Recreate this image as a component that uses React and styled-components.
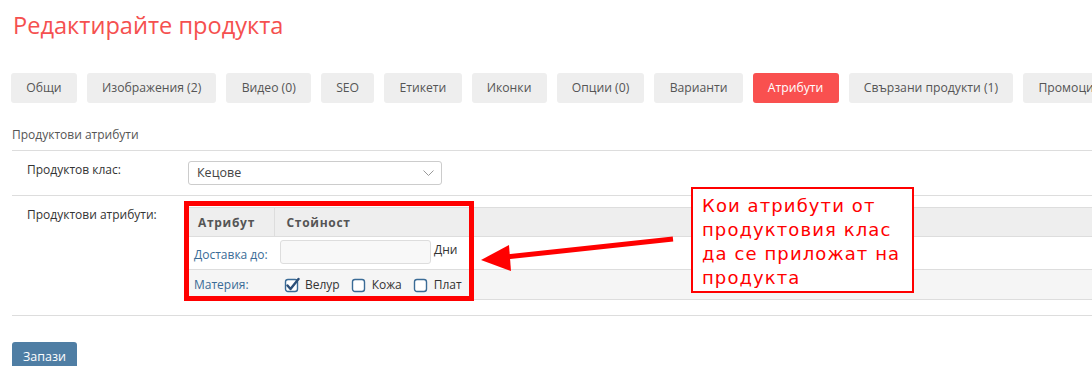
import React from "react";
import styled, { createGlobalStyle } from "styled-components";

const Global = createGlobalStyle`
  html, body { margin: 0; padding: 0; background: #fff; overflow: hidden; }
  body { font-family: "Open Sans", "Noto Sans", sans-serif; font-size: 12px; color: #444; }
  * { box-sizing: border-box; }
`;

const Page = styled.div`
  position: relative;
  width: 1092px;
  height: 366px;
  padding-left: 12px;
  overflow: hidden;
`;

const Title = styled.h1`
  margin: 9px 0 0 1px;
  font-size: 23.6px;
  line-height: 32px;
  font-weight: 400;
  color: #f5504f;
`;

const Tabs = styled.div`
  display: flex;
  gap: 10px;
  margin-top: 32px;
  margin-left: -1px;
  white-space: nowrap;
`;

const Tab = styled.div`
  flex: none;
  height: 30px;
  line-height: 30px;
  padding: 0 15.2px;
  border-radius: 3px;
  font-size: 12.2px;
  background: ${(p) => (p.$active ? "#f9504f" : "#eeeeee")};
  color: ${(p) => (p.$active ? "#ffffff" : "#555555")};
`;

const SectionLabel = styled.div`
  margin-top: 23px;
  padding-bottom: 6px;
  line-height: 18px;
  font-size: 12px;
  color: #555;
  border-bottom: 1px solid #dddddd;
`;

const FormRow = styled.div`
  display: flex;
  padding: ${(p) => p.$pad};
  border-bottom: 1px solid #dddddd;
`;

const Label = styled.div`
  flex: none;
  width: 174px;
  padding-left: 15px;
  line-height: 18px;
  color: #333;
  font-size: 12px;
  margin-top: ${(p) => p.$mt || 0}px;
`;

const Select = styled.div`
  position: relative;
  width: 254px;
  height: 24px;
  margin-left: 2px;
  border: 1px solid #cccccc;
  border-radius: 3px;
  padding-left: 8px;
  line-height: 22px;
  color: #444;
  font-size: 12.5px;
  svg { position: absolute; right: 7px; top: 8px; }
`;

const TableWrap = styled.div`
  position: relative;
  flex: 1;
`;

const Table = styled.table`
  width: 100%;
  border-collapse: collapse;
  border-top: 1px solid #dddddd;
  td, th { padding: 0; }
`;

const HeadRow = styled.tr`
  background: #eeeeee;
  height: 29px;
`;

const Th = styled.th`
  text-align: left;
  font-weight: 700;
  font-size: 12px;
  letter-spacing: 0.7px;
  color: #555;
  padding: 0 12px !important;
  border-right: ${(p) => (p.$divider ? "1px solid #dddddd" : "none")};
  width: ${(p) => p.$w || "auto"};
`;

const BodyRow = styled.tr`
  background: ${(p) => (p.$alt ? "#f5f5f5" : "#ffffff")};
  height: ${(p) => p.$h}px;
  border-top: 1px solid #dddddd;
  border-bottom: 1px solid #dddddd;
`;

const NameCell = styled.td`
  padding-left: 8px !important;
  color: #3a6b96;
  font-size: 12px;
  vertical-align: middle;
  padding-top: ${(p) => p.$pt || 0}px !important;
`;

const ValueCell = styled.td`
  padding-left: 6px !important;
  vertical-align: top;
`;

const InputLine = styled.div`
  display: flex;
  align-items: flex-start;
  padding-top: 3px;
`;

const Input = styled.div`
  width: 151px;
  height: 24px;
  border: 1px solid #dddddd;
  border-radius: 3px;
  background: #f8f8f8;
`;

const Unit = styled.span`
  margin-left: 3px;
  line-height: 18px;
  margin-top: 1px;
  font-size: 12px;
  color: #333;
`;

const Checks = styled.div`
  display: flex;
  align-items: center;
  height: 29px;
  padding-left: 4px;
`;

const CheckItem = styled.label`
  display: flex;
  align-items: center;
  margin-right: 11px;
  color: #333;
  font-size: 12px;
  svg { margin-right: 5px; }
`;

const Highlight = styled.div`
  position: absolute;
  left: -2px;
  top: -6px;
  width: 290px;
  height: 100px;
  border: 5px solid #ff0000;
  pointer-events: none;
`;

const Note = styled.div`
  position: absolute;
  left: 691px;
  top: 187px;
  width: 223px;
  height: 106px;
  border: 2px solid #ff0000;
  background: #ffffff;
  padding: 5px 0 0 9px;
  font-family: "DejaVu Sans", sans-serif;
  font-size: 18px;
  letter-spacing: 1.1px;
  line-height: 24px;
  color: #ff0000;
  white-space: nowrap;
`;

const Arrow = styled.svg`
  position: absolute;
  left: 470px;
  top: 225px;
`;

const SaveButton = styled.button`
  display: block;
  margin-top: 26px;
  height: 30px;
  padding: 0 11px;
  border: none;
  border-radius: 3px;
  background: #4f7ea4;
  color: #ffffff;
  font-family: "Open Sans", sans-serif;
  font-size: 12.5px;
  line-height: 30px;
`;

const Box = ({ checked }) => (
  <svg width="16" height="16" viewBox="0 0 16 16">
    <rect x="1.5" y="2.5" width="12" height="12" rx="2.5" fill="#fff" stroke="#3a6b96" strokeWidth="1.4" />
    {checked && (
      <path d="M3.5 8.5 L6.5 12 L14.5 2" fill="none" stroke="#2c4f78" strokeWidth="2.4" strokeLinecap="round" strokeLinejoin="round" />
    )}
  </svg>
);

const tabs = [
  "Общи",
  "Изображения (2)",
  "Видео (0)",
  "SEO",
  "Етикети",
  "Иконки",
  "Опции (0)",
  "Варианти",
  "Атрибути",
  "Свързани продукти (1)",
  "Промоции",
];

export default function App() {
  return (
    <>
      <Global />
      <Page>
        <Title>Редактирайте продукта</Title>
        <Tabs>
          {tabs.map((t) => (
            <Tab key={t} $active={t === "Атрибути"}>{t}</Tab>
          ))}
        </Tabs>
        <SectionLabel>Продуктови атрибути</SectionLabel>
        <FormRow $pad="10px 0 10px 0">
          <Label>Продуктов клас:</Label>
          <Select>
            Кецове
            <svg width="11" height="7" viewBox="0 0 11 7">
              <path d="M0.5 0.5 L5.5 5.5 L10.5 0.5" fill="none" stroke="#999" strokeWidth="1" />
            </svg>
          </Select>
        </FormRow>
        <FormRow $pad="11px 0 15px 0">
          <Label $mt={-1}>Продуктови атрибути:</Label>
          <TableWrap>
            <Table>
              <thead>
                <HeadRow>
                  <Th $divider $w="88px">Атрибут</Th>
                  <Th>Стойност</Th>
                </HeadRow>
              </thead>
              <tbody>
                <BodyRow $h={33}>
                  <NameCell $pt={2}>Доставка до:</NameCell>
                  <ValueCell>
                    <InputLine>
                      <Input />
                      <Unit>Дни</Unit>
                    </InputLine>
                  </ValueCell>
                </BodyRow>
                <BodyRow $h={30} $alt>
                  <NameCell>Материя:</NameCell>
                  <ValueCell>
                    <Checks>
                      <CheckItem><Box checked />Велур</CheckItem>
                      <CheckItem><Box />Кожа</CheckItem>
                      <CheckItem><Box />Плат</CheckItem>
                    </Checks>
                  </ValueCell>
                </BodyRow>
              </tbody>
            </Table>
            <Highlight />
          </TableWrap>
        </FormRow>
        <SaveButton>Запази</SaveButton>
        <Arrow width="210" height="55" viewBox="0 0 210 55">
          <line x1="203" y1="14" x2="36" y2="32" stroke="#ff0000" strokeWidth="5" />
          <polygon points="11,35 39,20 41,46" fill="#ff0000" />
        </Arrow>
        <Note>
          Кои атрибути от
          <br />
          продуктовия клас
          <br />
          да се приложат на
          <br />
          продукта
        </Note>
      </Page>
    </>
  );
}
